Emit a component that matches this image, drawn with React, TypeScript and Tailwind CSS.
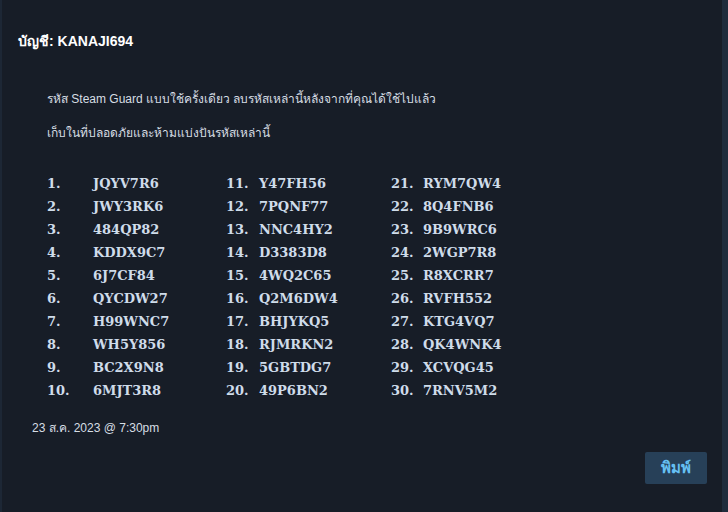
const codes = [
  "JQYV7R6", "JWY3RK6", "484QP82", "KDDX9C7", "6J7CF84",
  "QYCDW27", "H99WNC7", "WH5Y856", "BC2X9N8", "6MJT3R8",
  "Y47FH56", "7PQNF77", "NNC4HY2", "D3383D8", "4WQ2C65",
  "Q2M6DW4", "BHJYKQ5", "RJMRKN2", "5GBTDG7", "49P6BN2",
  "RYM7QW4", "8Q4FNB6", "9B9WRC6", "2WGP7R8", "R8XCRR7",
  "RVFH552", "KTG4VQ7", "QK4WNK4", "XCVQG45", "7RNV5M2",
];

const columns = [
  { start: 0, colW: "w-[179px]", numW: "w-[46px]" },
  { start: 10, colW: "w-[165px]", numW: "w-[33px]" },
  { start: 20, colW: "w-[165px]", numW: "w-[32px]" },
];

export default function App() {
  return (
    <div className="flex h-[512px] w-[728px] bg-[#171d27] font-['Liberation_Sans',sans-serif]">
      <div className="w-[2px] bg-[#1d2735]" />
      <div className="relative flex flex-1 flex-col">
        <h1 className="pl-4 pt-[31px] text-[14px] font-semibold leading-[20px] text-white">
          บัญชี: KANAJI694
        </h1>

        <div className="pl-[45px] pt-[39px] text-[12px] leading-[18px] text-[#d6dde4]">
          <p>รหัส Steam Guard แบบใช้ครั้งเดียว ลบรหัสเหล่านี้หลังจากที่คุณได้ใช้ไปแล้ว</p>
          <p className="mt-4">เก็บในที่ปลอดภัยและห้ามแบ่งปันรหัสเหล่านี้</p>
        </div>

        <div className="flex pl-[45px] pt-[30px] font-['DejaVu_Serif',serif] text-[13px] font-bold text-[#cfdcea]">
          {columns.map((col) => (
            <div key={col.start} className={`${col.colW} flex flex-col`}>
              {codes.slice(col.start, col.start + 10).map((code, i) => (
                <div key={code} className="flex h-[23px] items-center">
                  <span className={col.numW}>{col.start + i + 1}.</span>
                  <span>{code}</span>
                </div>
              ))}
            </div>
          ))}
        </div>

        <p className="pl-[30px] pt-[18px] text-[12px] leading-[16px] text-[#d6dde4]">
          23 ส.ค. 2023 @ 7:30pm
        </p>

        <div className="flex justify-end pr-[15px] pt-[16px]">
          <button className="h-[32px] w-[62px] rounded-[2px] bg-[#274058] text-[15px] font-semibold text-[#66c0f4]">
            พิมพ์
          </button>
        </div>
      </div>
      <div className="w-[6px] bg-[#1f2c3c]" />
    </div>
  );
}
